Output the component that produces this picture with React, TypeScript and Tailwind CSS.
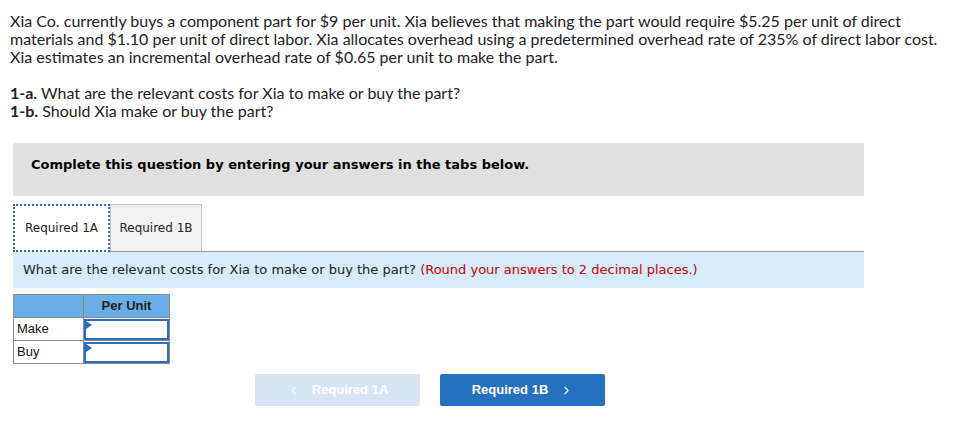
import React from "react";
import { ChevronLeft, ChevronRight } from "lucide-react";

const prose = { fontFamily: "Lato, 'Open Sans', sans-serif" };
const verdana = { fontFamily: "'DejaVu Sans', Verdana, sans-serif" };
const arial = { fontFamily: "'Liberation Sans', Arial, sans-serif" };

function InputCell() {
  return (
    <td className="border border-[#8a8a8a] p-0 h-[23px]">
      <div className="relative h-[21px] border-2 border-[#2a6ebb] bg-white">
        <span className="absolute left-0 top-0 h-0 w-0 border-t-[4px] border-b-[4px] border-l-[6px] border-t-transparent border-b-transparent border-l-[#2a6ebb]" />
      </div>
    </td>
  );
}

export default function App() {
  return (
    <div className="w-[964px] h-[430px] bg-white overflow-hidden relative">
      <div className="pl-[10px] pt-[12px] text-[16px] leading-[18px] text-[#222]" style={prose}>
        <p>
          Xia Co. currently buys a component part for $9 per unit. Xia believes that making the part would require $5.25 per unit of direct
          <br />
          materials and $1.10 per unit of direct labor. Xia allocates overhead using a predetermined overhead rate of 235% of direct labor cost.
          <br />
          Xia estimates an incremental overhead rate of $0.65 per unit to make the part.
        </p>
        <p className="mt-[18px]">
          <b>1-a.</b> What are the relevant costs for Xia to make or buy the part?
          <br />
          <b>1-b.</b> Should Xia make or buy the part?
        </p>
      </div>

      <div className="ml-[13px] w-[851px] mt-[23px]">
        <div className="h-[53px] bg-[#e0e0e0] flex items-center pl-[18px] pb-[10px] text-[13px] font-bold text-black" style={verdana}>
          Complete this question by entering your answers in the tabs below.
        </div>

        <div className="mt-[8px] flex items-end h-[47px] text-[12px] text-[#222]" style={verdana}>
          <div className="h-[48px] w-[97px] bg-white border-2 border-dotted border-[#2a6ebb] flex items-center justify-center relative z-10 -mb-[1px]">
            Required 1A
          </div>
          <div className="h-[47px] w-[92px] bg-[#f2f2f2] border border-[#c4c4c4] border-b-0 flex items-center justify-center">
            Required 1B
          </div>
        </div>
        <div className="border-t border-[#999]" />
        <div className="h-[36px] bg-[#d6ecfa] flex items-center pl-[10px] text-[13px] text-[#222]" style={verdana}>
          What are the relevant costs for Xia to make or buy the part?&nbsp;
          <span className="text-[#cc0000]">(Round your answers to 2 decimal places.)</span>
        </div>

        <table className="mt-[6px] border-collapse text-[13px] text-[#111]" style={arial}>
          <tbody>
            <tr className="h-[23px] bg-[#6aaee8]">
              <th className="w-[70px] border border-[#8a8a8a]" />
              <th className="w-[86px] border border-[#8a8a8a] font-bold text-center text-[#222]">Per Unit</th>
            </tr>
            <tr>
              <td className="border border-[#8a8a8a] pl-[3px] h-[23px] bg-white">Make</td>
              <InputCell />
            </tr>
            <tr>
              <td className="border border-[#8a8a8a] pl-[3px] h-[23px] bg-white">Buy</td>
              <InputCell />
            </tr>
          </tbody>
        </table>
      </div>

      <div className="mt-[10px] ml-[255px] flex gap-[20px] text-[13px] font-bold text-white" style={arial}>
        <div className="w-[165px] h-[32px] rounded-[2px] bg-[#d6e4f4] flex items-center justify-center gap-[12px]">
          <ChevronLeft size={13} strokeWidth={2} />
          <span>Required 1A</span>
        </div>
        <div className="w-[165px] h-[32px] rounded-[2px] bg-[#2670c0] flex items-center justify-center gap-[12px]">
          <span>Required 1B</span>
          <ChevronRight size={13} strokeWidth={2} />
        </div>
      </div>
    </div>
  );
}
